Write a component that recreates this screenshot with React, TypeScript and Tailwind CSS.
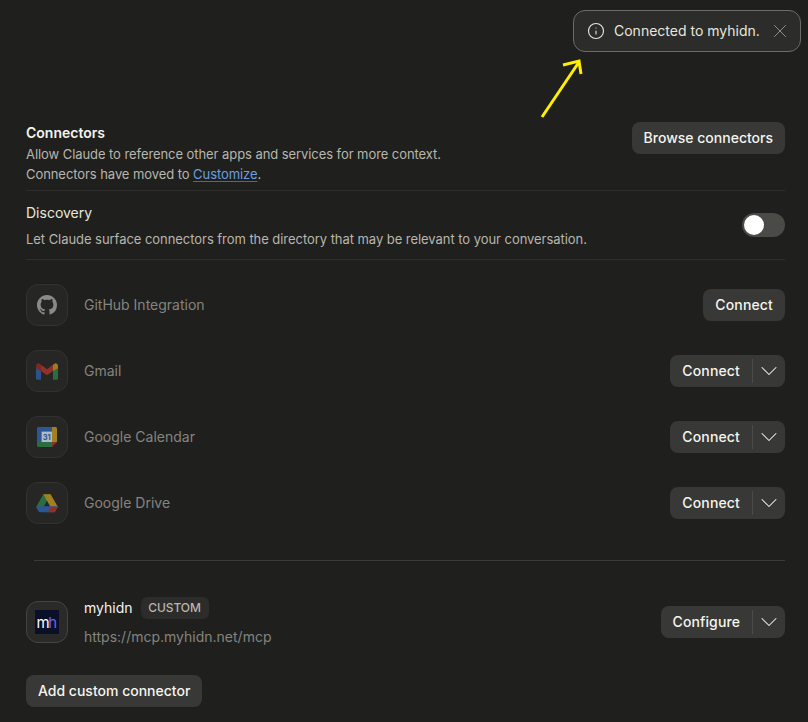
import { ChevronDown, Info, X } from "lucide-react";
import { ReactNode } from "react";

const GithubIcon = () => (
  <svg viewBox="0 0 16 16" className="w-5 h-5" fill="#8a8a87">
    <path d="M8 0C3.58 0 0 3.58 0 8c0 3.54 2.29 6.53 5.47 7.59.4.07.55-.17.55-.38 0-.19-.01-.82-.01-1.49-2.01.37-2.53-.49-2.69-.94-.09-.23-.48-.94-.82-1.13-.28-.15-.68-.52-.01-.53.63-.01 1.08.58 1.23.82.72 1.21 1.87.87 2.33.66.07-.52.28-.87.51-1.07-1.78-.2-3.64-.89-3.64-3.95 0-.87.31-1.59.82-2.15-.08-.2-.36-1.02.08-2.12 0 0 .67-.21 2.2.82.64-.18 1.32-.27 2-.27s1.36.09 2 .27c1.53-1.04 2.2-.82 2.2-.82.44 1.1.16 1.92.08 2.12.51.56.82 1.27.82 2.15 0 3.07-1.87 3.75-3.65 3.95.29.25.54.73.54 1.48 0 1.07-.01 1.93-.01 2.2 0 .21.15.46.55.38A8.01 8.01 0 0 0 16 8c0-4.42-3.58-8-8-8z" />
  </svg>
);

const GmailIcon = () => (
  <svg viewBox="0 0 24 18" className="w-[22px] h-[17px] opacity-85">
    <path d="M0 3v13.500C0 17.300.7 18 1.500 18H5.500V8.500z" fill="#2f5a9e" />
    <path d="M18.500 8.500V18h4c.8 0 1.500-.7 1.500-1.500V3z" fill="#2b7a47" />
    <path d="M5.500 8.500 12 13l6.500-4.500V1.500L12 6.500 5.500 1.500z" fill="#a5332b" />
    <path d="M0 3v2.500l5.500 3V1.500L3.500.2C2-.6 0 .8 0 3z" fill="#8c2a24" />
    <path d="M18.500 1.500v7l5.500-3V3c0-2.200-2-3.600-3.500-2.800z" fill="#b58a1b" />
  </svg>
);

const CalendarIcon = () => (
  <svg viewBox="0 0 20 20" className="w-5 h-5 opacity-85">
    <path d="M1.500 0H15v4.500H4.500V15H0V1.500C0 .7.700 0 1.500 0z" fill="#2f5fa8" />
    <path d="M15 0h3.500c.8 0 1.500.7 1.500 1.500V15h-5z" fill="#b8901f" />
    <path d="M0 15h15v5H1.500C.7 20 0 19.300 0 18.500z" fill="#2b7a47" />
    <path d="M15 15h5l-5 5z" fill="#a5332b" />
    <rect x="4.500" y="4.500" width="10.500" height="10.500" fill="#c9d3e0" />
    <text x="9.750" y="12.800" textAnchor="middle" fontSize="7.500" fontWeight="700" fill="#2f5fa8" fontFamily="Inter, sans-serif">31</text>
  </svg>
);

const DriveIcon = () => (
  <svg viewBox="0 0 24 20" className="w-[22px] h-[19px] opacity-85">
    <path d="M8 0h8l-4 7-4 7H0z" fill="#2b7a47" />
    <path d="M8 0h8l8 14h-8z" fill="#b8901f" />
    <path d="M4 13h20l-3.500 6.500H3.500L0 14z" fill="#2f5fa8" />
    <path d="M16 13.500h8l-3.500 6h-8z" fill="#a5332b" />
    <path d="M8 13.500h8L12.500 19.500h-1z" fill="#2f5fa8" />
  </svg>
);

const connectors = [
  { name: "GitHub Integration", icon: <GithubIcon />, split: false },
  { name: "Gmail", icon: <GmailIcon />, split: true },
  { name: "Google Calendar", icon: <CalendarIcon />, split: true },
  { name: "Google Drive", icon: <DriveIcon />, split: true },
];

const SplitButton = ({ label }: { label: string }) => (
  <div className="flex items-center h-8 rounded-lg bg-[#383836] text-[#f5f4ef] text-sm font-medium">
    <span className={`px-3 ${label === "Connect" ? "tracking-[0.15px]" : "tracking-[0.1px]"}`}>{label}</span>
    <span className="w-px h-6 bg-[#4b4b48]" />
    <span className="w-8 flex justify-center">
      <ChevronDown className="w-7 h-7" strokeWidth={0.9} />
    </span>
  </div>
);

const IconBox = ({ children, active }: { children: ReactNode; active?: boolean }) => (
  <div className={`w-[42px] h-[42px] rounded-xl flex items-center justify-center shrink-0 border ${active ? "border-[#454543] bg-[#2a2a28]" : "border-[#323230] bg-[#262624]"}`}>
    {children}
  </div>
);

export default function App() {
  return (
    <div className="relative w-[808px] h-[722px] overflow-hidden bg-[#1f1f1e] font-['Inter',sans-serif] text-sm pl-[26px] pr-[23px] pt-[122px]">
      {/* Toast */}
      <div className="absolute left-[573px] top-[10px] w-[228px] h-[42px] rounded-xl border border-[#6b6b68] bg-[#2c2c2a] flex items-center pl-[13px] text-[#e8e6dc]">
        <Info className="w-[18px] h-[18px]" strokeWidth={1.5} />
        <span className="ml-[9px]">Connected to myhidn.</span>
        <X className="absolute right-[9px] w-[22px] h-[22px] text-[#a3a29c]" strokeWidth={0.9} />
      </div>

      {/* Yellow annotation arrow */}
      <svg className="absolute left-[536px] top-[54px] w-[50px] h-[68px]" viewBox="0 0 50 68" fill="none" stroke="#ffee00" strokeWidth="3">
        <path d="M6 63 43 8" />
        <path d="M27 11 43 7 45 20" />
      </svg>

      {/* Header */}
      <div className="flex justify-between border-b border-[#2e2e2c] pb-[6px]">
        <div>
          <h2 className="font-semibold text-[#f5f4ef] leading-[18px] mt-[2px]">Connectors</h2>
          <p className="text-[13px] text-[#b8b6ad] leading-5 mt-[2px] tracking-[-0.07px]">Allow Claude to reference other apps and services for more context.</p>
          <p className="text-[13px] text-[#b8b6ad] leading-5 tracking-[-0.07px]">
            Connectors have moved to <a className="text-[#6a9fe0] underline underline-offset-2 decoration-[#47689a]">Customize</a>.
          </p>
        </div>
        <button className="self-start h-8 px-3 rounded-lg bg-[#383836] text-[#f5f4ef] font-medium">Browse connectors</button>
      </div>

      {/* Discovery */}
      <div className="flex items-center justify-between border-b border-[#2e2e2c] h-[69px]">
        <div className="pt-[2px]">
          <div className="text-[#e8e6dc] leading-5">Discovery</div>
          <div className="text-[13px] text-[#b8b6ad] leading-5 mt-[6px] tracking-[-0.05px]">Let Claude surface connectors from the directory that may be relevant to your conversation.</div>
        </div>
        <div className="w-[43px] h-6 rounded-full bg-[#4a4a47] flex items-center pl-[2px]">
          <div className="w-5 h-5 rounded-full bg-white" />
        </div>
      </div>

      {/* Connector list */}
      <div className="flex flex-col gap-6 mt-6">
        {connectors.map((c) => (
          <div key={c.name} className="flex items-center gap-4">
            <IconBox>{c.icon}</IconBox>
            <span className="flex-1 text-[#85847f]">{c.name}</span>
            {c.split ? (
              <SplitButton label="Connect" />
            ) : (
              <button className="h-8 px-3 rounded-lg bg-[#383836] text-[#f5f4ef] font-medium tracking-[0.15px]">Connect</button>
            )}
          </div>
        ))}
      </div>

      <div className="h-px bg-[#3a3a38] ml-2 mt-9" />

      {/* Custom connector */}
      <div className="flex items-center gap-4 mt-9">
        <IconBox active>
          <div className="w-6 h-6 bg-[#0b1029] flex items-center justify-center text-[15px] tracking-[-1.5px] leading-none pr-[2px]">
            <span className="text-white">m</span>
            <span className="text-[#6a63e8]">h</span>
          </div>
        </IconBox>
        <div className="flex-1">
          <div className="flex items-center gap-2">
            <span className="text-[#f5f4ef]">myhidn</span>
            <span className="h-[22px] w-[68px] flex items-center justify-center rounded-md bg-[#2c2c2a] text-xs font-medium text-[#b8b6ad] tracking-[-0.1px]">CUSTOM</span>
          </div>
          <div className="text-[#85847f] mt-2 leading-5">https://mcp.myhidn.net/mcp</div>
        </div>
        <SplitButton label="Configure" />
      </div>

      <button className="mt-7 h-8 px-3 rounded-lg bg-[#383836] text-[#f5f4ef] font-medium">Add custom connector</button>
    </div>
  );
}
